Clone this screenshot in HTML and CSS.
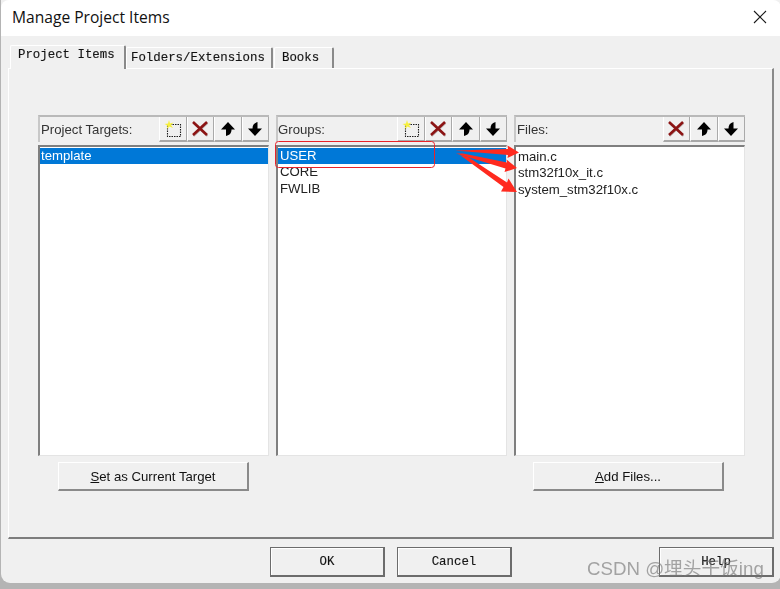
FILE: index.html
```html
<!DOCTYPE html>
<html lang="en">
<head>
<meta charset="utf-8">
<title>Manage Project Items</title>
<link rel="stylesheet" href="styles.css">
</head>
<body>
<div class="window">
  <header class="titlebar">
    <span class="title">Manage Project Items</span>
    <svg class="close" width="14" height="14" viewBox="0 0 14 14"><path d="M1 1 13 13M13 1 1 13" stroke="#1a1a1a" stroke-width="1.1" fill="none"/></svg>
  </header>
  <div class="dialog">
    <nav class="tabs">
      <div class="tab active">Project Items</div>
      <div class="tab second">Folders/Extensions</div>
      <div class="tab third">Books</div>
    </nav>
    <section class="panel">
      <div class="columns">
        <div class="column">
          <div class="head">
            <span class="label">Project Targets:</span>
            <div class="tools">
              <button class="tool"><svg width="20" height="20" viewBox="0 0 20 20"><use href="#i-new"/></svg></button>
              <button class="tool"><svg width="20" height="20" viewBox="0 0 20 20"><use href="#i-del"/></svg></button>
              <button class="tool"><svg width="20" height="20" viewBox="0 0 20 20"><use href="#i-up"/></svg></button>
              <button class="tool"><svg width="20" height="20" viewBox="0 0 20 20"><use href="#i-down"/></svg></button>
            </div>
          </div>
          <ul class="list">
            <li class="selected">template</li>
          </ul>
        </div>
        <div class="column">
          <div class="head">
            <span class="label">Groups:</span>
            <div class="tools">
              <button class="tool"><svg width="20" height="20" viewBox="0 0 20 20"><use href="#i-new"/></svg></button>
              <button class="tool"><svg width="20" height="20" viewBox="0 0 20 20"><use href="#i-del"/></svg></button>
              <button class="tool"><svg width="20" height="20" viewBox="0 0 20 20"><use href="#i-up"/></svg></button>
              <button class="tool"><svg width="20" height="20" viewBox="0 0 20 20"><use href="#i-down"/></svg></button>
            </div>
          </div>
          <ul class="list">
            <li class="selected">USER</li>
            <li>CORE</li>
            <li>FWLIB</li>
          </ul>
        </div>
        <div class="column">
          <div class="head">
            <span class="label">Files:</span>
            <div class="tools">
              <button class="tool"><svg width="20" height="20" viewBox="0 0 20 20"><use href="#i-del"/></svg></button>
              <button class="tool"><svg width="20" height="20" viewBox="0 0 20 20"><use href="#i-up"/></svg></button>
              <button class="tool"><svg width="20" height="20" viewBox="0 0 20 20"><use href="#i-down"/></svg></button>
            </div>
          </div>
          <ul class="list files">
            <li>main.c</li>
            <li>stm32f10x_it.c</li>
            <li>system_stm32f10x.c</li>
          </ul>
        </div>
      </div>
      <div class="actions">
        <button class="action"><u>S</u>et as Current Target</button>
        <button class="action"><u>A</u>dd Files...</button>
      </div>
    </section>
    <footer class="footer">
      <button class="dlg">OK</button>
      <button class="dlg">Cancel</button>
      <button class="dlg help">Help</button>
    </footer>
  </div>
</div>

<svg class="annot" width="780" height="589" viewBox="0 0 780 589">
  <rect x="275.5" y="141.5" width="159" height="26" rx="3" fill="none" stroke="#e8232a" stroke-width="1"/>
  <g fill="#ff2a1f">
    <path d="M455 150.500 508 149 507.500 145.500 519 152.500 507.500 158 508 155Z"/>
    <path d="M456 153.500 463 153.500 507 162.500 506.500 159.500 517 168 504.500 172 505.500 168.500Z"/>
    <path d="M460 155 468 157 507 182.500 508.500 178.500 517 192 501 191.500 503.500 187Z"/>
  </g>
</svg>
<div class="watermark">CSDN @埋头干饭ing</div>

<svg class="defs" width="0" height="0">
  <defs>
    <g id="i-new">
      <rect x="4.500" y="5.500" width="13" height="12" fill="none" stroke="#1c1c1c" stroke-width="1.100" stroke-dasharray="1.500 1"/>
      <path d="M6 1 7 4.500 10.500 3.500 8 6 10 9 6.500 7.500 4 10 4.500 6.500 1.500 5 5 4.500Z" fill="#f7f03c"/>
    </g>
    <g id="i-del">
      <path d="M3.500 4 17.500 17M17.500 4 3.500 17" stroke="#b9b0b0" stroke-width="2" fill="none"/>
      <path d="M3 3 17 16M17 3 3 16" stroke="#8c1414" stroke-width="2.600" fill="none"/>
    </g>
    <g id="i-up">
      <path d="M10 3 17 10.500H13.500C13.500 14 12 16 8 17V10.500H3Z" fill="#000"/>
    </g>
    <g id="i-down">
      <path d="M10 17 3 9.500H7.500C7.500 6 9 4 12.500 3V9.500H17Z" fill="#000"/>
    </g>
  </defs>
</svg>
</body>
</html>
```
FILE: styles.css
```css
* { box-sizing: border-box; }
html, body { margin: 0; height: 100%; }
body {
  width: 780px;
  height: 589px;
  overflow: hidden;
  position: relative;
  background: #b4b4b4;
  font-family: "Liberation Sans", Arial, sans-serif;
  color: #111;
}
.window {
  width: 780px;
  height: 583px;
  margin-left: 1px;
  border-radius: 0 0 9px 9px;
  overflow: hidden;
  background: #f0f0f0;
  display: flex;
  flex-direction: column;
  filter: blur(0.3px);
}
.titlebar {
  height: 36px;
  flex: none;
  background: #fff;
  display: flex;
  align-items: center;
  justify-content: space-between;
  padding: 0 14px 3px 11px;
  border-radius: 8px 8px 0 0;
}
.title {
  font-family: "Open Sans", sans-serif;
  font-size: 15.6px;
  color: #111;
}
.dialog {
  flex: 1;
  display: flex;
  flex-direction: column;
  padding: 9px 7px 0 7px;
  min-height: 0;
}
.tabs {
  display: flex;
  align-items: flex-end;
  height: 23px;
  flex: none;
  padding-left: 2px;
  position: relative;
  z-index: 1;
  font-family: "Liberation Mono", monospace;
  font-size: 12.4px;
  -webkit-text-stroke: 0.15px #222;
}
.tab {
  height: 21px;
  padding: 3px 6px 0 5px;
  border-top: 1px solid #fff;
  border-left: 1px solid #fff;
  border-right: 2px solid #8a8a8a;
  border-radius: 2px 2px 0 0;
  background: #f0f0f0;
  white-space: nowrap;
}
.tab.active {
  height: 24px;
  width: 116px;
  padding: 2px 0 0 7px;
  margin-bottom: -1px;
}
.tab.second { width: 147px; padding-left: 4px; }
.tab.third { width: 60px; padding-left: 7px; margin-left: 1px; }
.panel {
  height: 471px;
  flex: none;
  border-top: 1px solid #fff;
  border-left: 1px solid #fff;
  border-right: 2px solid #8a8a8a;
  border-bottom: 2px solid #7d7d7d;
  padding: 46px 26px 0 29px;
}
.columns {
  display: grid;
  grid-template-columns: 231px 231px 231px;
  column-gap: 7px;
}
.column { display: flex; flex-direction: column; gap: 3px; }
.head {
  height: 27px;
  display: flex;
  align-items: stretch;
  justify-content: space-between;
  border-top: 2px solid #b9b9b9;
  border-left: 2px solid #c8c8c8;
  padding-left: 1px;
}
.column:nth-child(2) .head { padding-left: 0; }
.label {
  font-size: 13.2px;
  line-height: 25px;
  color: #333;
}
.tools { display: flex; }
.tool {
  width: 27.500px;
  height: 25px;
  padding: 0;
  background: #f0f0f0;
  border: 0;
  border-left: 1px solid #fff;
  border-right: 1px solid #aaa;
  border-bottom: 2px solid #a8a8a8;
  display: flex;
  align-items: center;
  justify-content: center;
}
.list {
  list-style: none;
  margin: 0;
  padding: 1px 0 0 0;
  height: 311px;
  background: #fff;
  border-top: 2px solid #7f7f7f;
  border-left: 2px solid #7f7f7f;
  border-right: 1px solid #e4e4e4;
  border-bottom: 1px solid #e4e4e4;
  font-size: 13.2px;
  line-height: 16.300px;
  color: #222;
}
.list li { padding-left: 1px; height: 16.300px; white-space: nowrap; }
.list li.selected { background: #0078d7; color: #fff; }
.column:nth-child(2) .list li { padding-left: 2px; }
.list.files { padding-top: 2px; }
.list.files li { padding-left: 2px; }
.actions {
  display: flex;
  justify-content: space-between;
  padding: 6px 22px 0 20px;
}
.action, .dlg {
  background: #f0f0f0;
  color: #111;
  padding: 0;
}
.action {
  width: 191px;
  height: 29px;
  font-family: "Liberation Sans", sans-serif;
  font-size: 13.2px;
  border: 0;
  border-top: 1px solid #fff;
  border-left: 1px solid #fff;
  border-right: 2px solid #8a8a8a;
  border-bottom: 2px solid #8a8a8a;
}
.footer {
  display: flex;
  gap: 12px;
  padding: 8px 0 0 262px;
}
.dlg {
  width: 115px;
  height: 30px;
  font-family: "Liberation Mono", monospace;
  font-size: 12.4px;
  -webkit-text-stroke: 0.15px #222;
  border: 1px solid #6c6c6c;
  border-right-width: 2px;
  border-bottom-width: 2px;
  box-shadow: inset 1px 1px 0 #fff;
}
.dlg.help { margin-left: auto; }
.annot { position: absolute; left: 0; top: 0; pointer-events: none; }
.watermark {
  position: absolute;
  left: 587px;
  top: 559px;
  font-family: "Liberation Sans", "Noto Sans CJK SC", sans-serif;
  font-size: 18.700px;
  line-height: 20px;
  color: rgba(120, 120, 120, 0.65);
  white-space: nowrap;
}
.defs { position: absolute; }
```
